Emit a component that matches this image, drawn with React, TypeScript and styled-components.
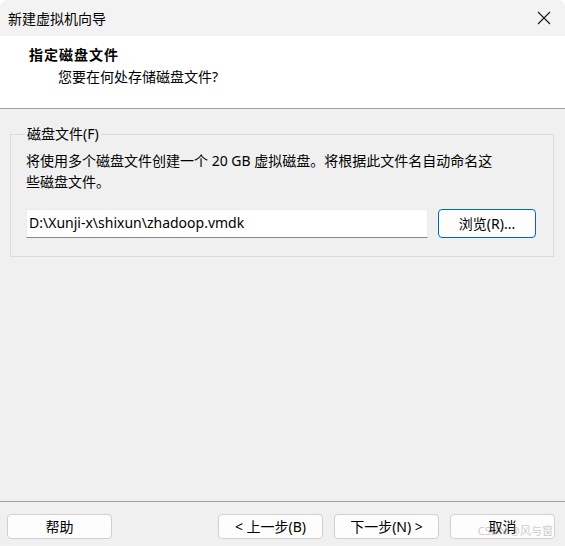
import React from 'react';
import styled, { createGlobalStyle } from 'styled-components';

const GlobalStyle = createGlobalStyle`
  html, body {
    margin: 0;
    padding: 0;
    background: #ffffff;
  }

  body {
    font-family: 'Noto Sans', 'Noto Sans CJK SC', sans-serif;
    font-size: 14px;
    color: #000;
  }
`;

const Window = styled.div`
  width: 565px;
  height: 546px;
  display: flex;
  flex-direction: column;
  background: #f0f0f0;
  border-radius: 8px 8px 0 0;
  overflow: hidden;
`;

const TitleBar = styled.div`
  height: 36px;
  flex-shrink: 0;
  display: flex;
  align-items: center;
  justify-content: space-between;
  padding: 0 14px 0 8px;
  background: #f3f3f3;

  span {
    font-size: 14px;
  }
`;

const Header = styled.div`
  height: 73px;
  flex-shrink: 0;
  display: flex;
  flex-direction: column;
  padding: 9px 0 0 29px;
  box-sizing: border-box;
  background: #ffffff;
  border-bottom: 1px solid #a0a0a0;

  h1 {
    margin: 0;
    font-size: 14px;
    font-weight: bold;
    line-height: 20px;
    letter-spacing: 1px;
  }

  p {
    margin: 2px 0 0 29px;
    font-size: 14px;
    line-height: 20px;
  }
`;

const Body = styled.div`
  flex: 1;
  padding: 16px 11px 0 10px;
`;

const GroupBox = styled.fieldset`
  margin: 0;
  height: 132px;
  box-sizing: border-box;
  padding: 0 15px 0 15px;
  border: 1px solid #dcdcdc;

  legend {
    margin-left: -1px;
    padding: 0 2px;
    font-size: 14px;
    line-height: 18px;
  }
`;

const Description = styled.p`
  margin: 7px 0 0 0;
  width: 475px;
  font-size: 14px;
  line-height: 21px;
`;

const PathRow = styled.div`
  margin-top: 17px;
  display: flex;
  align-items: center;
  gap: 10px;
`;

const PathInput = styled.div`
  width: 402px;
  height: 29px;
  box-sizing: border-box;
  padding: 3px 0 0 2px;
  background: #ffffff;
  border: 1px solid #ececec;
  border-bottom: 1px solid #868686;
  font-size: 14px;
  line-height: 20px;
`;

const Button = styled.button<{ $primary?: boolean }>`
  width: 105px;
  height: 25px;
  box-sizing: border-box;
  padding: 0;
  font-family: inherit;
  font-size: 14px;
  line-height: 20px;
  color: #000;
  background: #fdfdfd;
  border: 1px solid ${(p) => (p.$primary ? '#0067c0' : '#d0d0d0')};
  border-radius: 4px;
  box-shadow: ${(p) => (p.$primary ? 'inset 0 0 0 1px #ffffff' : 'none')};
`;

const BrowseButton = styled(Button)`
  width: 98px;
  height: 29px;
`;

const Footer = styled.div`
  flex-shrink: 0;
  height: 45px;
  position: relative;
  border-top: 1px solid #a0a0a0;
  display: flex;
  align-items: flex-start;
  padding: 12px 10px 0 7px;
  box-sizing: border-box;
`;

const NavGroup = styled.div`
  margin-left: auto;
  display: flex;
  gap: 11px;
`;

const Watermark = styled.span`
  position: absolute;
  right: 12px;
  bottom: 8px;
  font-size: 11px;
  color: rgba(150, 150, 150, 0.5);
  pointer-events: none;
`;

const CloseIcon = () => (
  <svg width="14" height="14" viewBox="0 0 14 14">
    <path d="M1 1L13 13M13 1L1 13" stroke="#1a1a1a" strokeWidth="1.1" fill="none" />
  </svg>
);

export default function App() {
  return (
    <>
      <GlobalStyle />
      <Window>
        <TitleBar>
          <span>新建虚拟机向导</span>
          <CloseIcon />
        </TitleBar>
        <Header>
          <h1>指定磁盘文件</h1>
          <p>您要在何处存储磁盘文件?</p>
        </Header>
        <Body>
          <GroupBox>
            <legend>磁盘文件(F)</legend>
            <Description>
              将使用多个磁盘文件创建一个 20 GB 虚拟磁盘。将根据此文件名自动命名这些磁盘文件。
            </Description>
            <PathRow>
              <PathInput>D:\Xunji-x\shixun\zhadoop.vmdk</PathInput>
              <BrowseButton $primary>浏览(R)...</BrowseButton>
            </PathRow>
          </GroupBox>
        </Body>
        <Footer>
          <Button>帮助</Button>
          <NavGroup>
            <Button>&lt; 上一步(B)</Button>
            <Button>下一步(N) &gt;</Button>
            <Button>取消</Button>
          </NavGroup>
          <Watermark>CSDN @风与窗</Watermark>
        </Footer>
      </Window>
    </>
  );
}
